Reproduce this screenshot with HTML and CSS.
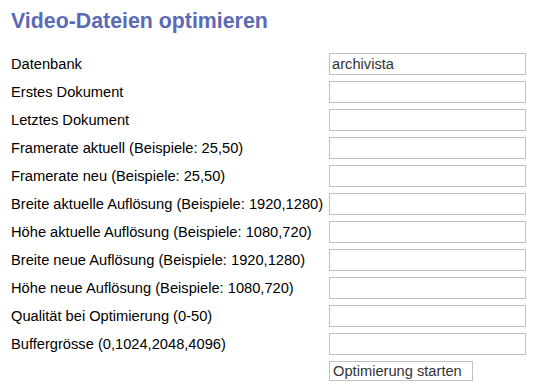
FILE: index.html
```html
<!DOCTYPE html>
<html lang="de">
<head>
    <meta charset="UTF-8">
    <title>Video-Dateien optimieren</title>
    <link rel="stylesheet" href="styles.css">
</head>
<body>
    <h1 class="title">Video-Dateien optimieren</h1>
    <form class="opt-form">
        <label for="db">Datenbank</label>
        <input type="text" id="db" value="archivista">
        <label for="first">Erstes Dokument</label>
        <input type="text" id="first">
        <label for="last">Letztes Dokument</label>
        <input type="text" id="last">
        <label for="fpsOld">Framerate aktuell (Beispiele: 25,50)</label>
        <input type="text" id="fpsOld">
        <label for="fpsNew">Framerate neu (Beispiele: 25,50)</label>
        <input type="text" id="fpsNew">
        <label for="wOld">Breite aktuelle Auflösung (Beispiele: 1920,1280)</label>
        <input type="text" id="wOld">
        <label for="hOld">Höhe aktuelle Auflösung (Beispiele: 1080,720)</label>
        <input type="text" id="hOld">
        <label for="wNew">Breite neue Auflösung (Beispiele: 1920,1280)</label>
        <input type="text" id="wNew">
        <label for="hNew">Höhe neue Auflösung (Beispiele: 1080,720)</label>
        <input type="text" id="hNew">
        <label for="quality">Qualität bei Optimierung (0-50)</label>
        <input type="text" id="quality">
        <label for="buffer">Buffergrösse (0,1024,2048,4096)</label>
        <input type="text" id="buffer">
        <span></span>
        <div class="actions">
            <button type="submit" class="start-btn">Optimierung starten</button>
        </div>
    </form>
</body>
</html>
```

FILE: styles.css
```css
* {
    box-sizing: border-box;
}

body {
    margin: 0;
    padding: 9px 11px 8px 11px;
    background-color: #fff;
    font-family: 'Liberation Sans', Arial, sans-serif;
    font-size: 11pt;
    color: #000;
}

.title {
    margin: 0 0 19px 0;
    font-size: 16pt;
    line-height: 25px;
    font-weight: bold;
    color: #5b6ab4;
}

.opt-form {
    display: grid;
    grid-template-columns: max-content 197px;
    column-gap: 6px;
    row-gap: 6px;
    align-items: center;
}

.opt-form input[type="text"] {
    width: 197px;
    height: 22px;
    padding: 0 2px;
    border: 1px solid #c0c0c0;
    font-family: 'Liberation Sans', Arial, sans-serif;
    font-size: 11pt;
    color: #333;
    outline: none;
}

.start-btn {
    display: block;
    width: 144px;
    height: 20px;
    padding: 0 3px;
    text-align: left;
    background-color: #fff;
    border: 1px solid #c0c0c0;
    font-family: 'Liberation Sans', Arial, sans-serif;
    font-size: 11pt;
    line-height: 18px;
    color: #333;
    cursor: pointer;
}
```
